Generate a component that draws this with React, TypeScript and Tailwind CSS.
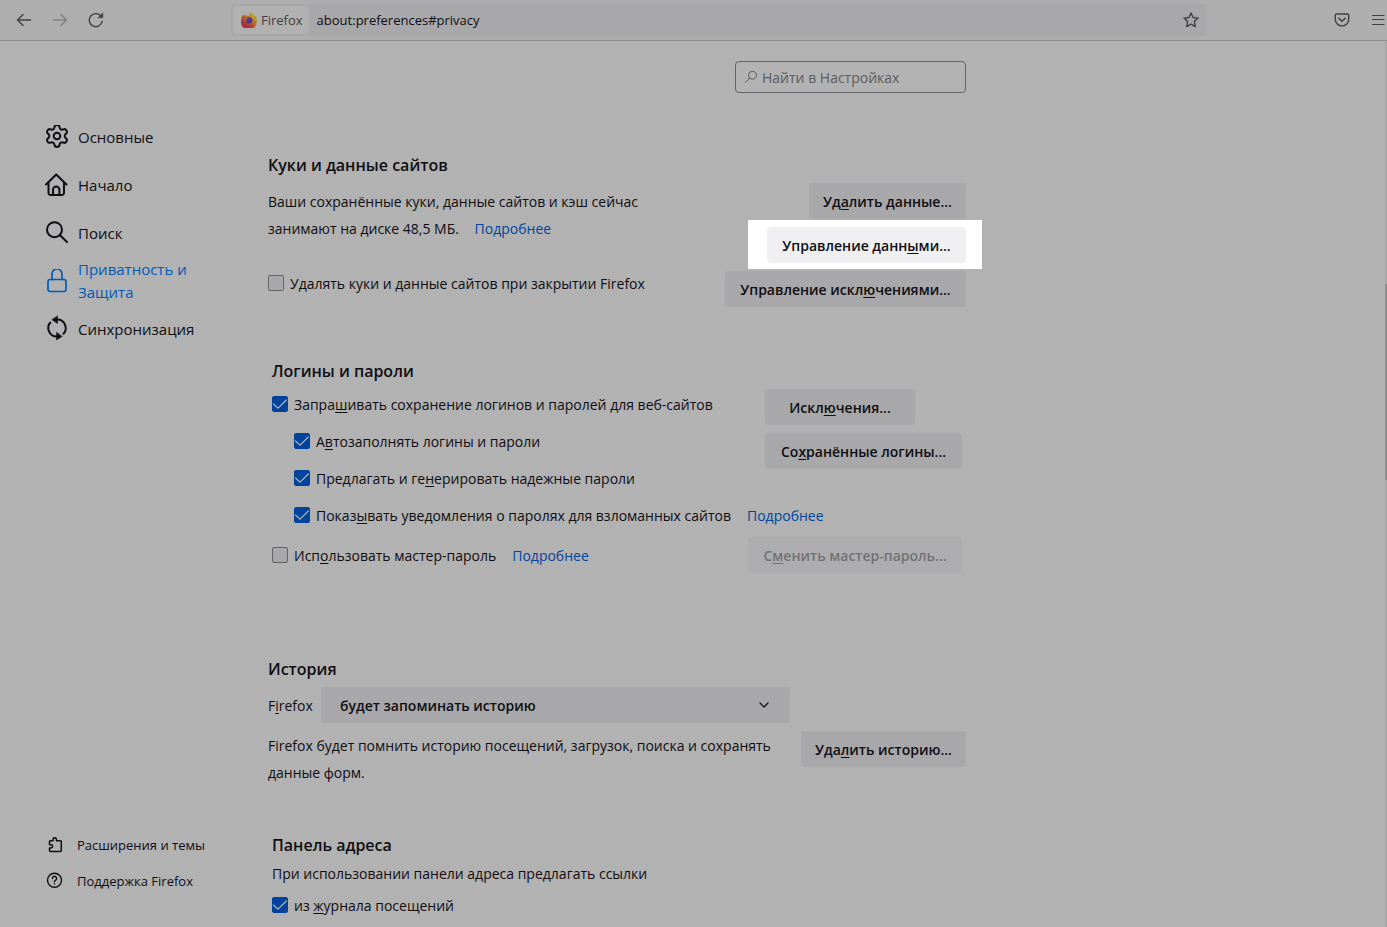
import { useId, useState, type ReactNode } from "react";

const FONT = "font-['Open_Sans','Noto_Sans',sans-serif]";

function Icon({ size = 24, className = "", children }: { size?: number; className?: string; children: ReactNode }) {
  return (
    <svg
      aria-hidden="true"
      width={size}
      height={size}
      viewBox={`0 0 ${size} ${size}`}
      fill="none"
      stroke="currentColor"
      strokeWidth="2"
      strokeLinecap="round"
      strokeLinejoin="round"
      className={`shrink-0 ${className}`}
    >
      {children}
    </svg>
  );
}

function FirefoxLogo() {
  return (
    <svg aria-hidden="true" width="16" height="16" viewBox="0 0 16 16" className="shrink-0">
      <defs>
        <linearGradient id="ff-body" x1="0.85" y1="0.05" x2="0.2" y2="0.95">
          <stop offset="0" stopColor="#b5a32c" />
          <stop offset="0.4" stopColor="#b4702a" />
          <stop offset="0.75" stopColor="#b0323a" />
          <stop offset="1" stopColor="#a3264f" />
        </linearGradient>
        <radialGradient id="ff-globe" cx="0.5" cy="0.4" r="0.6">
          <stop offset="0" stopColor="#64399e" />
          <stop offset="1" stopColor="#3d2f86" />
        </radialGradient>
      </defs>
      <path
        d="M10.8 0.3c.2 1.6 1.2 2.2 2.4 3.3.2.2.3.5.4.8l.8-.4c1.7 2.8 2.1 5.7.7 8.3A7.6 7.6 0 0 1 .3 8.6C.2 6.2.9 4.2 2.2 2.5l.5 1.6 1.2-1.7.8 1.4c1-.3 2.2-.2 3.2.1C8.2 2.5 9.2 1 10.8.3z"
        fill="url(#ff-body)"
      />
      <path d="M10.8.3c.2 1.6 1.2 2.2 2.4 3.3 1.5 1.6 2 4 1.1 6.2-.5-2.6-1.5-3.8-3.6-4.7C9.2 4.4 8.8 4 8.4 3.2 8.8 2 9.6.8 10.8.3z" fill="#b79f2f" />
      <circle cx="8" cy="8.3" r="3.1" fill="url(#ff-globe)" />
      <path d="M2.4 6c1.5-1 3.3-.8 5 .3-.3.9-1.6 1.2-2.3 1.4-.2 1.3.4 2.3 1.6 2.8-2.6.4-4.5-1.7-4.3-4.5z" fill="#b5602d" />
    </svg>
  );
}

function Key({ children }: { children: ReactNode }) {
  return <span className="underline decoration-1 underline-offset-2">{children}</span>;
}

function Button({ className = "", disabled = false, children }: { className?: string; disabled?: boolean; children: ReactNode }) {
  return (
    <button
      type="button"
      disabled={disabled}
      className={`h-9 shrink-0 rounded bg-[#a8a8ab] pt-0.5 text-center text-sm font-semibold whitespace-nowrap disabled:opacity-40 ${className}`}
    >
      {children}
    </button>
  );
}

function CheckRow({ className = "", initial = false, link = false, children }: { className?: string; initial?: boolean; link?: boolean; children: ReactNode }) {
  const id = useId();
  const [checked, setChecked] = useState(initial);
  return (
    <div className={`flex items-center whitespace-nowrap ${className}`}>
      <span className="grid size-4 shrink-0 place-items-center">
        <input
          id={id}
          type="checkbox"
          checked={checked}
          onChange={(e) => setChecked(e.target.checked)}
          className="peer col-start-1 row-start-1 size-4 appearance-none rounded-xs border border-[#646468] bg-[#a8a8ab] checked:border-[#00439c] checked:bg-[#00439c]"
        />
        <svg
          aria-hidden="true"
          width="16"
          height="16"
          viewBox="0 0 16 16"
          fill="none"
          stroke="#b2b2b2"
          strokeWidth="1.2"
          className="pointer-events-none invisible col-start-1 row-start-1 peer-checked:visible"
        >
          <path d="M1.5 8 6 12.2 14.3 4" strokeLinecap="round" />
        </svg>
      </span>
      <label htmlFor={id} className="pt-0.5 pl-1.5">
        {children}
      </label>
      {link && <MoreLink className="pt-0.5 pl-4" />}
    </div>
  );
}

function MoreLink({ className = "" }: { className?: string }) {
  return (
    <a href="#more" className={`text-[#00449d] ${className}`}>
      Подробнее
    </a>
  );
}

function Heading({ children }: { children: ReactNode }) {
  return <h2 className="text-base leading-6 font-semibold">{children}</h2>;
}

function NavItem({ icon, active = false, children }: { icon: ReactNode; active?: boolean; children: ReactNode }) {
  return (
    <li>
      <a href="#category" className={`flex h-12 items-center gap-[9px] leading-[23px] ${active ? "text-[#005bb8]" : ""}`}>
        {icon}
        <span>{children}</span>
      </a>
    </li>
  );
}

function Toolbar() {
  return (
    <header className="flex h-[41px] shrink-0 items-center border-b border-[#8e8e90] bg-[#aeaeae] text-[#3f3f45]">
      <div className="flex w-[231px] shrink-0 items-center gap-5 pl-4">
        <button type="button" aria-label="Назад">
          <Icon size={16}>
            <path d="M1.5 8h13M7 2.5 1.5 8 7 13.5" strokeWidth="1.4" />
          </Icon>
        </button>
        <button type="button" aria-label="Вперёд" disabled className="opacity-40">
          <Icon size={16}>
            <path d="M1.5 8h13M9 2.5 14.5 8 9 13.5" strokeWidth="1.4" />
          </Icon>
        </button>
        <button type="button" aria-label="Обновить">
          <Icon size={16}>
            <path d="M14.2 9.4A6.500 6.500 0 1 1 12.500 3.600" strokeWidth="1.4" />
            <path d="M14.8 1.2v4.600h-4.600z" fill="currentColor" strokeWidth="0.6" />
          </Icon>
        </button>
      </div>
      <div className="flex h-8 min-w-0 flex-1 items-center rounded bg-[#a8a8aa] pr-2 pl-0.5 text-[13px]">
        <div className="flex h-7 items-center gap-1 rounded bg-[#b1b1b2] pr-1.5 pl-2">
          <FirefoxLogo />
          <span className="pt-px">Firefox</span>
        </div>
        <input aria-label="Адрес" defaultValue="about:preferences#privacy" className="min-w-0 flex-1 pt-px pl-2 text-[#0f0e12] outline-none" />
        <button type="button" aria-label="Добавить в закладки">
          <Icon size={16}>
            <path d="M8 1 10.1 5.500 15 6.100 11.400 9.500 12.300 14.600 8 12.200 3.700 14.600 4.600 9.500 1 6.100 5.900 5.500z" strokeWidth="1.4" />
          </Icon>
        </button>
      </div>
      <div className="flex w-[180px] shrink-0 items-center justify-end gap-5 pr-px">
        <button type="button" aria-label="Pocket">
          <Icon size={16}>
            <path d="M2.500 2h11a1.200 1.200 0 0 1 1.200 1.200v4a6.700 6.700 0 0 1-13.400 0v-4A1.200 1.200 0 0 1 2.500 2z" strokeWidth="1.4" />
            <path d="M4.800 6.200 8 9.300l3.200-3.100" strokeWidth="1.5" />
          </Icon>
        </button>
        <button type="button" aria-label="Меню">
          <Icon size={16}>
            <path d="M2.500 3.500h11.500M2.500 7.500h11.500M2.500 12.500h11.500" strokeWidth="1.2" />
          </Icon>
        </button>
      </div>
    </header>
  );
}

function Sidebar() {
  return (
    <nav aria-label="Разделы настроек" className="flex w-[268px] shrink-0 flex-col pt-[72px] pb-7 pl-[45px]">
      <ul className="w-[160px] text-[15px]">
        <NavItem
          icon={
            <Icon>
              <g transform="translate(-1.2 -2.2) scale(1.1)">
                <path
                  strokeWidth="1.8"
                  d="M9.671 4.136a2.34 2.34 0 0 1 4.659 0 2.34 2.34 0 0 0 3.319 1.915 2.34 2.34 0 0 1 2.33 4.033 2.34 2.34 0 0 0 0 3.831 2.34 2.34 0 0 1-2.33 4.033 2.34 2.34 0 0 0-3.319 1.915 2.34 2.34 0 0 1-4.659 0 2.34 2.34 0 0 0-3.32-1.915 2.34 2.34 0 0 1-2.33-4.033 2.34 2.34 0 0 0 0-3.831A2.34 2.34 0 0 1 6.35 6.051a2.34 2.34 0 0 0 3.319-1.915"
                />
                <circle cx="12" cy="12" r="3" strokeWidth="1.8" />
              </g>
            </Icon>
          }
        >
          Основные
        </NavItem>
        <NavItem
          icon={
            <Icon>
              <path d="M1 11.5 11.2 1.5 21.5 11.5M3.500 9.500v10.300a2.200 2.200 0 0 0 2.200 2.200h11.100a2.200 2.200 0 0 0 2.200-2.200V9.500M8 22v-5.200a3.200 3.200 0 0 1 6.400 0V22" />
            </Icon>
          }
        >
          Начало
        </NavItem>
        <NavItem
          icon={
            <Icon>
              <circle cx="9.5" cy="8.7" r="7.5" />
              <path d="M15 14.2 22 21" />
            </Icon>
          }
        >
          Поиск
        </NavItem>
        <NavItem
          active
          icon={
            <Icon>
              <rect x="3" y="10.5" width="18" height="12" rx="2.2" strokeWidth="1.7" />
              <path d="M7 10.5V5a5 5 0 0 1 10 0v5.500" strokeWidth="1.7" />
            </Icon>
          }
        >
          Приватность и Защита
        </NavItem>
        <NavItem
          icon={
            <Icon className="overflow-visible">
              <path d="M12 2.500a8.500 8.500 0 0 1 6 14.700M12 19.500A8.500 8.500 0 0 1 5.800 5" strokeLinecap="butt" />
              <path d="M12.500-1v7.500L7 2.700zM11.500 15.500v7.500L17 19.500z" fill="currentColor" strokeWidth="0.5" />
            </Icon>
          }
        >
          Синхронизация
        </NavItem>
      </ul>
      <ul className="mt-auto text-[13px]">
        <li>
          <a href="#addons" className="flex h-9 items-center gap-3.5 pl-0.5">
            <Icon size={16}>
              <path
                strokeWidth="1.5"
                d="M2.500 6V4.600A.9.9 0 0 1 3.400 3.700H6V2.400a1.700 1.700 0 0 1 3.400 0v1.300h4A.9.9 0 0 1 14.300 4.600v9a.9.9 0 0 1-.9.9H3.400a.9.9 0 0 1-.9-.9V11h1.500a1.600 1.600 0 0 0 0-3.300H2.500z"
              />
            </Icon>
            Расширения и темы
          </a>
        </li>
        <li>
          <a href="#support" className="flex h-9 items-center gap-3.5 pl-0.5">
            <Icon size={16} className="overflow-visible">
              <circle cx="7.5" cy="7.2" r="7" strokeWidth="1.4" />
              <path d="M5.400 5.400a2.100 2.100 0 1 1 3.200 1.800c-.8.5-1.100.8-1.100 1.600M7.500 10.800v.1" strokeWidth="1.4" />
            </Icon>
            Поддержка Firefox
          </a>
        </li>
      </ul>
    </nav>
  );
}

export default function App() {
  return (
    <div className={`flex h-screen flex-col overflow-hidden bg-[#b2b2b2] text-sm text-[#0f0e12] ${FONT}`}>
      <Toolbar />
      <div className="flex min-h-0 flex-1">
        <Sidebar />
        <main className="w-[698px] shrink-0 pt-5">
          <label className="ml-auto flex h-8 w-[231px] items-center gap-1 rounded border border-[#646468] px-2">
            <Icon size={14} className="text-[#5a5a5e]">
              <circle cx="8.5" cy="5.3" r="4" strokeWidth="1" />
              <path d="M5.500 8.300 1.500 12.200" strokeWidth="1" />
            </Icon>
            <input type="search" aria-label="Найти в Настройках" placeholder="Найти в Настройках" className="min-w-0 flex-1 pt-0.5 outline-none placeholder:text-[#5c5c60]" />
          </label>

          <section className="mt-[60px]">
            <Heading>Куки и данные сайтов</Heading>
            <div className="mt-1.5 flex justify-between">
              <div className="w-[400px] pt-[5px]">
                <p className="leading-[27px]">
                  Ваши сохранённые куки, данные сайтов и кэш сейчас
                  <br />
                  занимают на диске 48,5 МБ. <MoreLink className="pl-3" />
                </p>
                <CheckRow className="mt-[23px] h-9">
                  У<Key>д</Key>алять куки и данные сайтов при закрытии Firefox
                </CheckRow>
              </div>
              <div className="flex flex-col items-end gap-2">
                <Button className="w-[157px]">
                  Уд<Key>а</Key>лить данные...
                </Button>
                <div className="relative">
                  <div className="absolute -top-[7px] -right-4 -bottom-1.5 -left-[19px] bg-white" />
                  <Button className="relative w-[199px] bg-[#f0f0f2]!">
                    Управление данн<Key>ы</Key>ми...
                  </Button>
                </div>
                <Button className="w-[241px]">
                  Управление искл<Key>ю</Key>чениями...
                </Button>
              </div>
            </div>
          </section>

          <section className="mt-[52px] px-1">
            <Heading>Логины и пароли</Heading>
            <div className="mt-0.5 flex">
              <div className="w-[493px] shrink-0">
                <CheckRow initial className="h-[37px]">
                  Запра<Key>ш</Key>ивать сохранение логинов и паролей для веб-сайтов
                </CheckRow>
                <CheckRow initial className="ml-[22px] h-[37px]">
                  А<Key>в</Key>тозаполнять логины и пароли
                </CheckRow>
                <CheckRow initial className="ml-[22px] h-[37px]">
                  Предлагать и ге<Key>н</Key>ерировать надежные пароли
                </CheckRow>
              </div>
              <div className="flex flex-col items-start gap-2 pt-1">
                <Button className="w-[150px]">
                  Искл<Key>ю</Key>чения...
                </Button>
                <Button className="w-[197px]">
                  Со<Key>х</Key>ранённые логины...
                </Button>
              </div>
            </div>
            <CheckRow initial link className="ml-[22px] h-[37px]">
              Показ<Key>ы</Key>вать уведомления о паролях для взломанных сайтов
            </CheckRow>
            <div className="mt-1 flex items-center justify-between">
              <CheckRow link>
                Исп<Key>о</Key>льзовать мастер-пароль
              </CheckRow>
              <Button disabled className="w-[214px]">
                С<Key>м</Key>енить мастер-пароль...
              </Button>
            </div>
          </section>

          <section className="mt-[84px]">
            <Heading>История</Heading>
            <div className="mt-1.5 flex items-center">
              <label htmlFor="history-mode" className="w-[53px] pt-0.5">
                F<Key>i</Key>refox
              </label>
              <div className="relative">
                <select id="history-mode" className="h-9 w-[469px] appearance-none rounded bg-[#a8a8ab] px-[19px] pt-0.5 font-semibold">
                  <option>будет запоминать историю</option>
                </select>
                <Icon size={12} className="pointer-events-none absolute top-3 right-5">
                  <path d="M2 4 6 8l4-4" strokeWidth="1.2" />
                </Icon>
              </div>
            </div>
            <div className="mt-2 flex items-start justify-between">
              <p className="w-[525px] pt-px leading-[27px]">
                Firefox будет помнить историю посещений, загрузок, поиска и сохранять данные форм.
              </p>
              <Button className="w-[165px]">
                Уда<Key>л</Key>ить историю...
              </Button>
            </div>
          </section>

          <section className="mt-[47px] px-1">
            <Heading>Панель адреса</Heading>
            <p className="mt-[5px] leading-6">При использовании панели адреса предлагать ссылки</p>
            <CheckRow initial className="mt-[7px] h-6">
              из <Key>ж</Key>урнала посещений
            </CheckRow>
          </section>
        </main>
        <div aria-hidden="true" className="ml-auto w-0.5 bg-[#a8a8a8] pt-[243px]">
          <div className="h-[196px] bg-[#8f8f8f]" />
        </div>
      </div>
    </div>
  );
}
